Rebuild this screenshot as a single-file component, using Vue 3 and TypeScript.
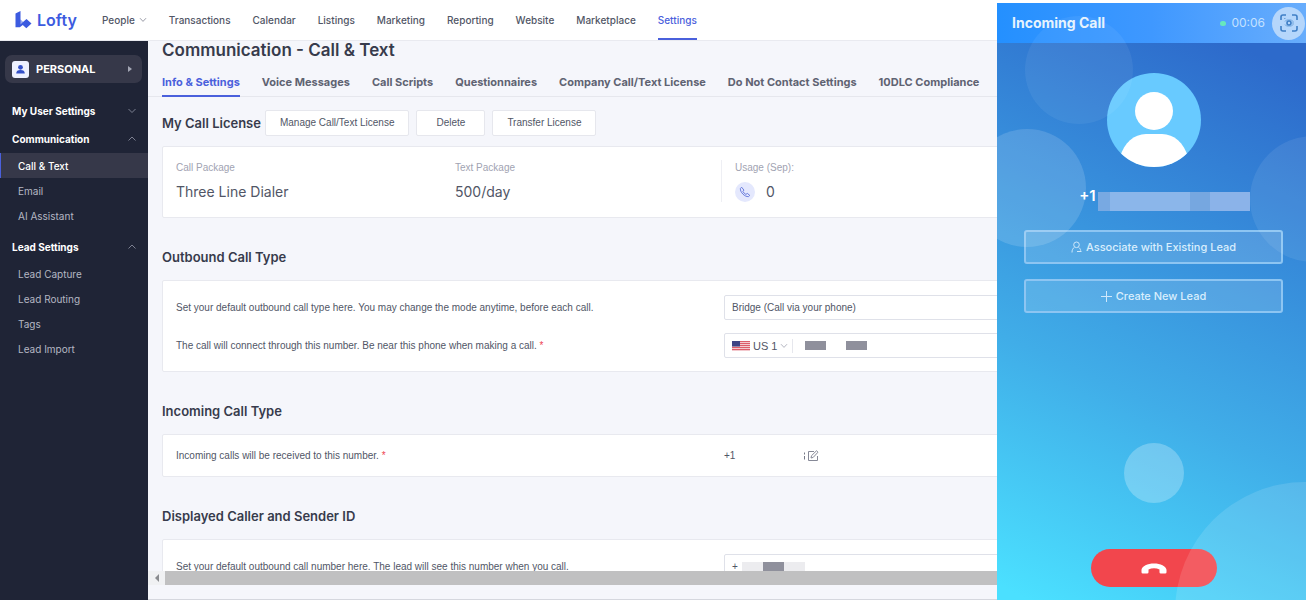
<script setup lang="ts">
interface NavItem { label: string; menu?: boolean; active?: boolean }
interface SideGroup { title: string; open: boolean; items: { label: string; active?: boolean }[] }

const nav: NavItem[] = [
  { label: 'People', menu: true },
  { label: 'Transactions' },
  { label: 'Calendar' },
  { label: 'Listings' },
  { label: 'Marketing' },
  { label: 'Reporting' },
  { label: 'Website' },
  { label: 'Marketplace' },
  { label: 'Settings', active: true },
]

const groups: SideGroup[] = [
  { title: 'My User Settings', open: false, items: [] },
  {
    title: 'Communication',
    open: true,
    items: [{ label: 'Call & Text', active: true }, { label: 'Email' }, { label: 'AI Assistant' }],
  },
  {
    title: 'Lead Settings',
    open: true,
    items: [{ label: 'Lead Capture' }, { label: 'Lead Routing' }, { label: 'Tags' }, { label: 'Lead Import' }],
  },
]

const tabs: string[] = [
  'Info & Settings',
  'Voice Messages',
  'Call Scripts',
  'Questionnaires',
  'Company Call/Text License',
  'Do Not Contact Settings',
  '10DLC Compliance',
]
</script>

<template>
  <div class="page">
    <header class="topbar">
      <a class="brand" href="#">
        <svg width="17" height="18" viewBox="0 0 17 18" aria-hidden="true">
          <path d="M.5 2.500 5.500 0v8.600l2.500 2.300 3.500-2.900 5 4.600-5.200 4.600-3.500-3.300-3 2.400H.5z" fill="#3c5be0" />
          <path d="M5.500 8.600v5l2.500-2.700z" fill="#fff" opacity=".5" />
        </svg>
        <span>Lofty</span>
      </a>
      <nav class="nav">
        <a v-for="n in nav" :key="n.label" href="#" :class="{ active: n.active }">
          {{ n.label }}
          <svg v-if="n.menu" width="8" height="6" viewBox="0 0 8 6"><path d="M1 1.200 4 4.400 7 1.200" fill="none" stroke="#9a9ca8" /></svg>
        </a>
      </nav>
    </header>

    <div class="body">
      <aside class="sidebar">
        <button class="profile" type="button">
          <svg class="profile-icon" width="17" height="17" viewBox="0 0 17 17">
            <rect width="17" height="17" rx="3" fill="#eef1ff" />
            <circle cx="8.500" cy="6.300" r="2.400" fill="#3450c8" />
            <path d="M4.200 12.500c0-2.500 1.500-3.600 4.300-3.600s4.300 1.100 4.300 3.600z" fill="#3450c8" />
          </svg>
          <span>PERSONAL</span>
          <svg width="4" height="6" viewBox="0 0 4 6"><path d="M0 0 4 3 0 6z" fill="#a3a6b4" /></svg>
        </button>
        <div v-for="g in groups" :key="g.title" class="group">
          <button class="group-title" type="button" :aria-expanded="g.open">
            <span>{{ g.title }}</span>
            <svg width="8" height="6" viewBox="0 0 8 6">
              <path :d="g.open ? 'M.5 4.500 4 1l3.500 3.500' : 'M.5 1 4 4.500 7.500 1'" fill="none" stroke="#7d8091" />
            </svg>
          </button>
          <ul v-if="g.items.length">
            <li v-for="i in g.items" :key="i.label">
              <a href="#" :class="{ active: i.active }">{{ i.label }}</a>
            </li>
          </ul>
        </div>
      </aside>

      <main class="main">
        <div class="content">
          <h1>Communication - Call &amp; Text</h1>
          <nav class="tabs">
            <a v-for="(t, i) in tabs" :key="t" href="#" :class="{ active: i === 0 }">{{ t }}</a>
          </nav>

          <div class="license">
            <h2>My Call License</h2>
            <div class="actions">
              <button type="button">Manage Call/Text License</button>
              <button type="button" class="wide">Delete</button>
              <button type="button">Transfer License</button>
            </div>
          </div>

          <section class="card packages">
            <div class="package">
              <span class="caption">Call Package</span>
              <span class="figure">Three Line Dialer</span>
            </div>
            <div class="package">
              <span class="caption">Text Package</span>
              <span class="figure">500/day</span>
            </div>
            <div class="package usage">
              <span class="caption">Usage (Sep):</span>
              <span class="figure">
                <svg width="20" height="20" viewBox="0 0 20 20">
                  <circle cx="10" cy="10" r="10" fill="#e4e8fd" />
                  <path d="M6.600 5.200 5.400 6.500c-.4 3.700 4.400 8.500 8.100 8.100l1.300-1.200-2.500-2-1.400 1c-1.300-.6-2.300-1.600-3-3l1-1.300z" fill="none" stroke="#5b6fd8" stroke-width=".9" stroke-linejoin="round" />
                </svg>
                0
              </span>
            </div>
          </section>

          <h2 class="section-title">Outbound Call Type</h2>
          <section class="card form">
            <div class="row">
              <label for="mode">Set your default outbound call type here. You may change the mode anytime, before each call.</label>
              <select id="mode" class="field"><option>Bridge (Call via your phone)</option></select>
            </div>
            <div class="row">
              <label for="phone">The call will connect through this number. Be near this phone when making a call. <b>*</b></label>
              <div class="field phone">
                <button type="button" class="country">
                  <svg width="18" height="10" viewBox="0 0 18 10">
                    <rect width="18" height="10" fill="#f3c9ce" />
                    <path d="M0 .5h18M0 2.500h18M0 4.500h18M0 6.500h18M0 8.500h18" stroke="#dc5d69" />
                    <rect width="8" height="5.500" fill="#3d4384" />
                  </svg>
                  US 1
                  <svg width="8" height="6" viewBox="0 0 8 6"><path d="M1 1.200 4 4.400 7 1.200" fill="none" stroke="#b5b7c2" /></svg>
                </button>
                <i class="mask"></i><i class="mask"></i>
                <input id="phone" type="tel" />
              </div>
            </div>
          </section>

          <h2 class="section-title">Incoming Call Type</h2>
          <section class="card form single">
            <div class="row">
              <span class="text">Incoming calls will be received to this number. <b>*</b></span>
              <div class="number">
                <span>+1</span>
                <button type="button" aria-label="Edit number">
                  <svg width="16" height="12" viewBox="0 0 16 12" fill="none" stroke="#868997">
                    <path d="M1.500 2.500v2M1.500 6v3.500" stroke="#777a88" />
                    <path d="M11 1.500H5.500v9h9V6" />
                    <path d="m8 8 .5-2.300L13.500.8l1.500 1.400L10.200 7.400z" />
                  </svg>
                </button>
              </div>
            </div>
          </section>

          <h2 class="section-title">Displayed Caller and Sender ID</h2>
          <section class="card form">
            <div class="row">
              <label for="caller">Set your default outbound call number here. The lead will see this number when you call.</label>
              <div class="field caller">
                <span>+</span>
                <i class="mask pale"></i><i class="mask"></i><i class="mask pale"></i>
                <input id="caller" type="tel" />
              </div>
            </div>
          </section>
        </div>
        <div class="scrollbar">
          <button type="button" aria-label="Scroll left">
            <svg width="4" height="8" viewBox="0 0 4 8"><path d="M4 0v8L0 4z" fill="#8a8c90" /></svg>
          </button>
          <div class="thumb"></div>
        </div>
        <div class="strip"></div>
      </main>
    </div>

    <section class="call" aria-label="Incoming call">
      <div class="call-head">
        <span class="call-title">Incoming Call</span>
        <span class="timer">00:06</span>
        <button type="button" aria-label="Capture" class="capture">
          <svg width="18" height="18" viewBox="0 0 18 18" fill="none" stroke="#3f7fc6" stroke-width="1.600">
            <path d="M1 6V3a2 2 0 0 1 2-2h3M12 1h3a2 2 0 0 1 2 2v3M17 12v3a2 2 0 0 1-2 2h-3M6 17H3a2 2 0 0 1-2-2v-3" />
            <path d="M5 7.500 6.500 6h5L13 7.500v3L11.500 12h-5L5 10.500M4 4.500h1.500" stroke-width="1" stroke="#6fa5dc" />
            <circle cx="9" cy="9" r="2" />
          </svg>
        </button>
      </div>
      <div class="call-body">
        <svg class="avatar" width="94" height="94" viewBox="0 0 94 94">
          <defs><clipPath id="face"><circle cx="47" cy="47" r="47" /></clipPath></defs>
          <circle cx="47" cy="47" r="47" fill="#68caff" />
          <circle cx="47" cy="38" r="19" fill="#fff" />
          <path d="M13 84c4-14 14-23 26-23h16c12 0 22 9 26 23v12H13z" fill="#fff" clip-path="url(#face)" />
        </svg>
        <div class="caller-id">
          <span>+1</span>
          <div class="hidden-number"></div>
        </div>
        <button type="button" class="lead">
          <svg width="11" height="12" viewBox="0 0 11 12" fill="none" stroke="#cfe8fb">
            <circle cx="5.500" cy="3.800" r="2.800" />
            <path d="M3.500 6.200C1.800 7.300 1 9 1 11.500M7.500 6.200c1.200.8 2 2 2.200 3.500M6 10.500h4.500" />
          </svg>
          Associate with Existing Lead
        </button>
        <button type="button" class="lead">
          <svg width="11" height="11" viewBox="0 0 11 11" stroke="#cfe8fb"><path d="M5.500 0v11M0 5.500h11" /></svg>
          Create New Lead
        </button>
        <button type="button" class="hangup" aria-label="Decline call">
          <svg width="26" height="11" viewBox="0 0 26 11">
            <path d="M.5 6.800C1 3 6.500.5 13 .5S25 3 25.500 6.800v2.400q0 1.300-1.300 1.300h-4.400q-1.300 0-1.300-1.300V6.400Q16 5.300 13 5.300T7.500 6.400v2.800q0 1.300-1.300 1.300H1.800Q.5 10.500.5 9.200z" fill="#fff" />
          </svg>
        </button>
      </div>
      <svg class="bubbles" viewBox="0 0 309 597" preserveAspectRatio="xMaxYMin slice" aria-hidden="true">
        <g fill="#fff">
          <circle cx="82" cy="67" r="54" opacity=".06" />
          <circle cx="30" cy="185" r="59" opacity=".14" />
          <circle cx="316" cy="196" r="63" opacity=".08" />
          <circle cx="157" cy="470" r="30" opacity=".25" />
          <circle cx="308" cy="609" r="130" opacity=".12" />
        </g>
      </svg>
    </section>
  </div>
</template>

<style>
body { margin: 0; }
</style>

<style scoped>
* { box-sizing: border-box; }
.page {
  position: relative;
  display: flex;
  flex-direction: column;
  height: 100vh;
  overflow: hidden;
  background: #f5f6fb;
  color: #515666;
  font: 10px/14px "Liberation Sans", Arial, sans-serif;
}
a { color: inherit; text-decoration: none; }
button { font: inherit; color: inherit; border: 0; background: none; padding: 0; }
h1, h2, ul { margin: 0; padding: 0; }
ul { list-style: none; }
.topbar, .sidebar, .tabs, .figure, .call, h1, h2 { font-family: Inter, "Liberation Sans", sans-serif; }

.topbar {
  display: flex;
  flex: none;
  height: 41px;
  padding-left: 15px;
  background: #fff;
  border-bottom: 1px solid #e9eaf0;
}
.brand { display: flex; align-items: center; gap: 5px; width: 87px; color: #3c5be0; font-size: 16px; font-weight: 600; }
.nav { display: flex; gap: 22px; font-size: 10px; font-weight: 500; }
.nav a { display: flex; align-items: center; gap: 4px; border-bottom: 2px solid transparent; border-top: 2px solid transparent; white-space: nowrap; }
.nav a.active { color: #4a60dc; border-bottom-color: #4a60dc; }

.body { display: flex; flex: 1; min-height: 0; }
.sidebar { flex: none; width: 148px; background: #1f2436; color: #fff; padding-top: 14px; }
.profile {
  display: flex;
  align-items: center;
  width: 137px;
  height: 28px;
  margin: 0 0 14px 5px;
  padding: 0 10px 0 7px;
  border-radius: 7px;
  background: #363849;
  font-size: 11px;
  font-weight: 700;
}
.profile span { flex: 1; margin-left: 7px; text-align: left; }
.group-title { display: flex; align-items: center; justify-content: space-between; width: 100%; height: 28px; padding: 0 12px; font-weight: 700; }
.group ul { padding-bottom: 5px; }
.group a { display: flex; align-items: center; height: 25px; padding-left: 18px; color: #b4b7c3; }
.group a.active { background: #363849; color: #fff; font-weight: 500; box-shadow: inset 1px 0 #4a60dc; }

.main { display: flex; flex: 1; flex-direction: column; min-width: 0; }
.content { flex: 1; min-height: 0; overflow: hidden; padding-left: 14px; }
h1 { color: #373b4c; font-size: 17px; line-height: 18px; font-weight: 600; }
.tabs { display: flex; gap: 22px; height: 38px; margin-left: -14px; padding-left: 14px; border-bottom: 1px solid #e6e7ed; font-size: 11px; font-weight: 700; color: #5f6372; }
.tabs a { height: 38px; padding-top: 16px; border-bottom: 2px solid transparent; white-space: nowrap; }
.tabs a.active { color: #4a60dc; border-bottom-color: #4a60dc; }
.license { display: flex; align-items: center; gap: 4px; height: 26px; margin: 13px 0 10px; }
.actions { display: flex; gap: 7px; }
h2 { color: #373b4c; font-size: 13px; line-height: 20px; font-weight: 600; }
.license button { height: 26px; padding: 0 14px; border: 1px solid #e6e7ed; border-radius: 2px; background: #fff; }
.license .wide { padding: 0 19px; }
.card { background: #fff; border: 1px solid #e8e9ef; border-radius: 2px; }
.packages { display: grid; grid-template-columns: 279px 266px 1fr; height: 72px; padding: 13px; }
.package { display: flex; flex-direction: column; }
.caption { color: #a1a3b2; line-height: 16px; }
.figure { display: flex; flex: none; align-items: center; gap: 11px; height: 32px; color: #515666; font-size: 14px; }
.usage { height: 42px; padding-left: 13px; border-left: 1px solid #eeeff4; }
.section-title { margin: 29px 0 13px; }
.form { display: flex; flex-direction: column; gap: 13px; padding: 14px 13px 13px; }
.row { display: flex; align-items: center; }
.row label, .row .text { flex: none; width: 548px; }
.row b { color: #ee4453; font-weight: 500; }
.field { flex: 1; min-width: 0; height: 25px; padding: 0 7px; border: 1px solid #dfe1e9; border-radius: 2px; background: #fff; color: #515666; font: inherit; appearance: none; }
.phone, .caller { display: flex; align-items: center; }
.field input { flex: 1; min-width: 0; border: 0; padding: 0; background: none; font: inherit; }
.country { display: flex; align-items: center; gap: 3px; margin-right: 12px; padding-right: 4px; border-right: 1px solid #e6e7ed; font-size: 11px; }
.mask { width: 21px; height: 9px; background: #8f909c; }
.phone .mask + .mask { margin: 0 0 0 20px; }
.single { padding: 14px 13px 13px; }
.number { display: flex; align-items: center; justify-content: space-between; width: 95px; }
.number button { height: 12px; }
.number svg { display: block; }
.caller span { width: 10px; }
.caller .mask { height: 10px; }
.caller .pale { background: #ececef; }

.scrollbar { display: flex; flex: none; height: 14px; background: #f0f1f3; }
.scrollbar button { width: 17px; }
.scrollbar svg { display: block; margin: 0 auto; }
.thumb { flex: 1; background: #c0c0c1; }
.strip { flex: none; height: 15px; border-bottom: 1px solid #d5d7de; }

/* The call panel floats over the settings page. */
.call {
  position: absolute;
  top: 3px;
  right: 0;
  bottom: 0;
  display: flex;
  flex-direction: column;
  width: 309px;
  overflow: hidden;
  background: linear-gradient(205deg, #2d6acb 10%, #368bda 36%, #40ade8 64%, #4be0ff 98%);
  color: #e6f3fd;
}
.call-head { display: flex; align-items: center; height: 40px; flex: none; padding: 0 1px 0 15px; background: linear-gradient(90deg, #2490ff, #3f98ff 50%, #68adfc); }
.call-title { flex: 1; font-size: 14px; font-weight: 700; }
.timer { display: flex; align-items: center; gap: 5px; margin-right: 7px; color: #c4e1ff; font-size: 12px; }
.timer::before { content: ""; width: 6px; height: 5px; border-radius: 3px; background: #67e8bd; }
.capture { display: flex; align-items: center; justify-content: center; width: 33px; height: 33px; border-radius: 50%; background: #b5d6fb; }
.call-body { display: flex; flex: 1; flex-direction: column; align-items: center; min-height: 0; padding: 30px 23px 13px 27px; }
.avatar { flex: none; margin-bottom: 20px; }
.caller-id { display: flex; flex: none; gap: 2px; height: 24px; margin: 0 0 19px 22px; color: #fff; font-size: 15px; line-height: 18px; font-weight: 600; }
.hidden-number { width: 152px; height: 19px; margin-top: 5px; background: linear-gradient(90deg, #78a9e2 12px, #8bb6ea 12px 92px, #76a7e0 92px 112px, #8bb3e9 112px); }
.lead { display: flex; flex: none; align-items: center; justify-content: center; gap: 4px; width: 100%; height: 34px; margin-bottom: 15px; border: 2px solid #8dc5f2; border-radius: 3px; background: rgba(255, 255, 255, 0.14); color: #d9eefd; font-size: 11px; font-weight: 500; }
.hangup { display: flex; flex: none; align-items: center; justify-content: center; width: 126px; height: 38px; margin-top: auto; border-radius: 19px; background: #f2464d; }
.bubbles { position: absolute; top: 0; right: 0; width: 309px; height: 597px; pointer-events: none; }
</style>
